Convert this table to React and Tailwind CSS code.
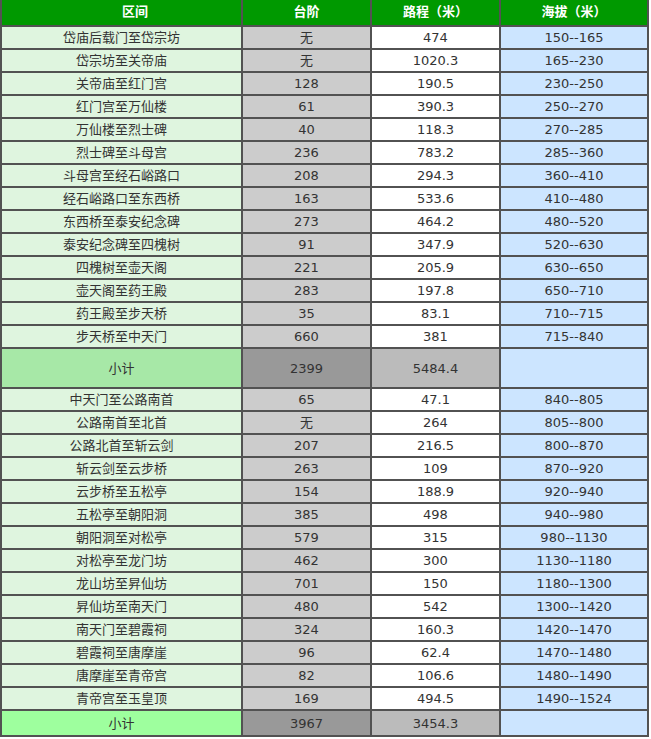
import React from "react";

const rowsA = [
  ["岱庙后载门至岱宗坊", "无", "474", "150--165"],
  ["岱宗坊至关帝庙", "无", "1020.3", "165--230"],
  ["关帝庙至红门宫", "128", "190.5", "230--250"],
  ["红门宫至万仙楼", "61", "390.3", "250--270"],
  ["万仙楼至烈士碑", "40", "118.3", "270--285"],
  ["烈士碑至斗母宫", "236", "783.2", "285--360"],
  ["斗母宫至经石峪路口", "208", "294.3", "360--410"],
  ["经石峪路口至东西桥", "163", "533.6", "410--480"],
  ["东西桥至泰安纪念碑", "273", "464.2", "480--520"],
  ["泰安纪念碑至四槐树", "91", "347.9", "520--630"],
  ["四槐树至壶天阁", "221", "205.9", "630--650"],
  ["壶天阁至药王殿", "283", "197.8", "650--710"],
  ["药王殿至步天桥", "35", "83.1", "710--715"],
  ["步天桥至中天门", "660", "381", "715--840"],
];

const rowsB = [
  ["中天门至公路南首", "65", "47.1", "840--805"],
  ["公路南首至北首", "无", "264", "805--800"],
  ["公路北首至斩云剑", "207", "216.5", "800--870"],
  ["斩云剑至云步桥", "263", "109", "870--920"],
  ["云步桥至五松亭", "154", "188.9", "920--940"],
  ["五松亭至朝阳洞", "385", "498", "940--980"],
  ["朝阳洞至对松亭", "579", "315", "980--1130"],
  ["对松亭至龙门坊", "462", "300", "1130--1180"],
  ["龙山坊至昇仙坊", "701", "150", "1180--1300"],
  ["昇仙坊至南天门", "480", "542", "1300--1420"],
  ["南天门至碧霞祠", "324", "160.3", "1420--1470"],
  ["碧霞祠至唐摩崖", "96", "62.4", "1470--1480"],
  ["唐摩崖至青帝宫", "82", "106.6", "1480--1490"],
  ["青帝宫至玉皇顶", "169", "494.5", "1490--1524"],
];

function Row({ r }) {
  return (
    <>
      <div className="h-[21px] bg-[#dff5df] flex items-center justify-center">{r[0]}</div>
      <div className="h-[21px] bg-[#cccccc] flex items-center justify-center">{r[1]}</div>
      <div className="h-[21px] bg-white flex items-center justify-center">{r[2]}</div>
      <div className="h-[21px] bg-[#cce5ff] flex items-center justify-center">{r[3]}</div>
    </>
  );
}

function Sub({ h, c1, a, b }) {
  return (
    <>
      <div className={`${h} ${c1} flex items-center justify-center`}>小计</div>
      <div className={`${h} bg-[#999999] flex items-center justify-center`}>{a}</div>
      <div className={`${h} bg-[#bbbbbb] flex items-center justify-center`}>{b}</div>
      <div className={`${h} bg-[#cce5ff]`}></div>
    </>
  );
}

export default function App() {
  return (
    <div className="bg-white min-h-[739px]">
      <div
        className="w-[649px] grid grid-cols-[239px_127px_127px_146px] gap-[2px] bg-[#525252] px-[2px] pb-[2px] text-[13px] text-[#333333] leading-none"
        style={{ fontFamily: '"DejaVu Sans", "Noto Sans CJK SC", sans-serif' }}
      >
        <div className="h-[25px] bg-[#009900] text-white font-bold flex items-center justify-center pl-[27px] pb-[3px]">区间</div>
        <div className="h-[25px] bg-[#009900] text-white font-bold flex items-center justify-center pb-[3px]">台阶</div>
        <div className="h-[25px] bg-[#009900] text-white font-bold flex items-center justify-center pb-[3px]">路程（米）</div>
        <div className="h-[25px] bg-[#009900] text-white font-bold flex items-center justify-center pb-[3px]">海拔（米）</div>
        {rowsA.map((r, i) => (
          <Row key={"a" + i} r={r} />
        ))}
        <Sub h="h-[38px]" c1="bg-[#a7e8a7]" a="2399" b="5484.4" />
        {rowsB.map((r, i) => (
          <Row key={"b" + i} r={r} />
        ))}
        <Sub h="h-[24px]" c1="bg-[#9eff9e]" a="3967" b="3454.3" />
      </div>
    </div>
  );
}
